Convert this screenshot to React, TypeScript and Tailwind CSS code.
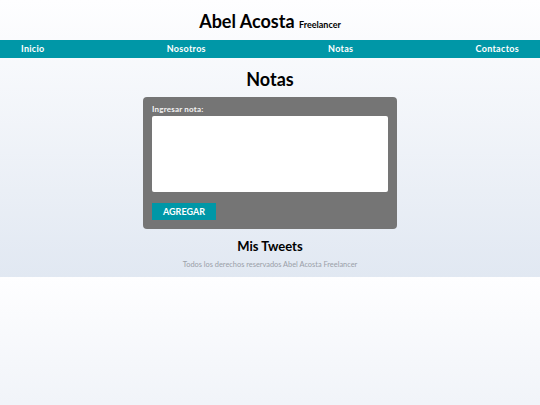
export default function App() {
  const links = ["Inicio", "Nosotros", "Notas", "Contactos"];
  return (
    <div className="min-h-screen bg-[linear-gradient(180deg,#fefeff_0%,#e1e8f2_100%)] bg-[length:100%_277px] bg-repeat-y font-['Lato',sans-serif] text-black">
      <header className="flex h-[40px] items-center justify-center pt-[1px]">
        <h1 className="text-[18px] font-bold leading-none">
          Abel Acosta <span className="text-[9px]">Freelancer</span>
        </h1>
      </header>
      <nav className="flex h-[18px] items-center justify-between bg-[#0097a7] px-[21px] text-[9px] font-bold tracking-[0.3px] text-white">
        {links.map((l) => (
          <a key={l} href="#">
            {l}
          </a>
        ))}
      </nav>
      <main className="flex flex-col items-center">
        <h2 className="mt-[10px] text-[18px] font-bold leading-[22px]">Notas</h2>
        <form className="mt-[7px] flex w-[254px] flex-col rounded-[4px] bg-[#757575] px-[9px] pb-[9px] pt-[6px]">
          <label className="text-[8px] font-bold leading-[13px] tracking-[0.2px] text-[#f3f3f3]">
            Ingresar nota:
          </label>
          <textarea className="h-[76px] w-full resize-none rounded-[2px] bg-white" />
          <button
            type="button"
            className="mt-[11px] h-[17px] w-[64px] bg-[#0097a7] text-[9px] font-bold text-white"
          >
            AGREGAR
          </button>
        </form>
        <h3 className="mt-[8px] text-[13px] font-bold leading-[18px]">Mis Tweets</h3>
        <footer className="mt-[5px] text-[7.4px] leading-[10px] text-[#9aa0a8]">
          Todos los derechos reservados Abel Acosta Freelancer
        </footer>
      </main>
    </div>
  );
}
